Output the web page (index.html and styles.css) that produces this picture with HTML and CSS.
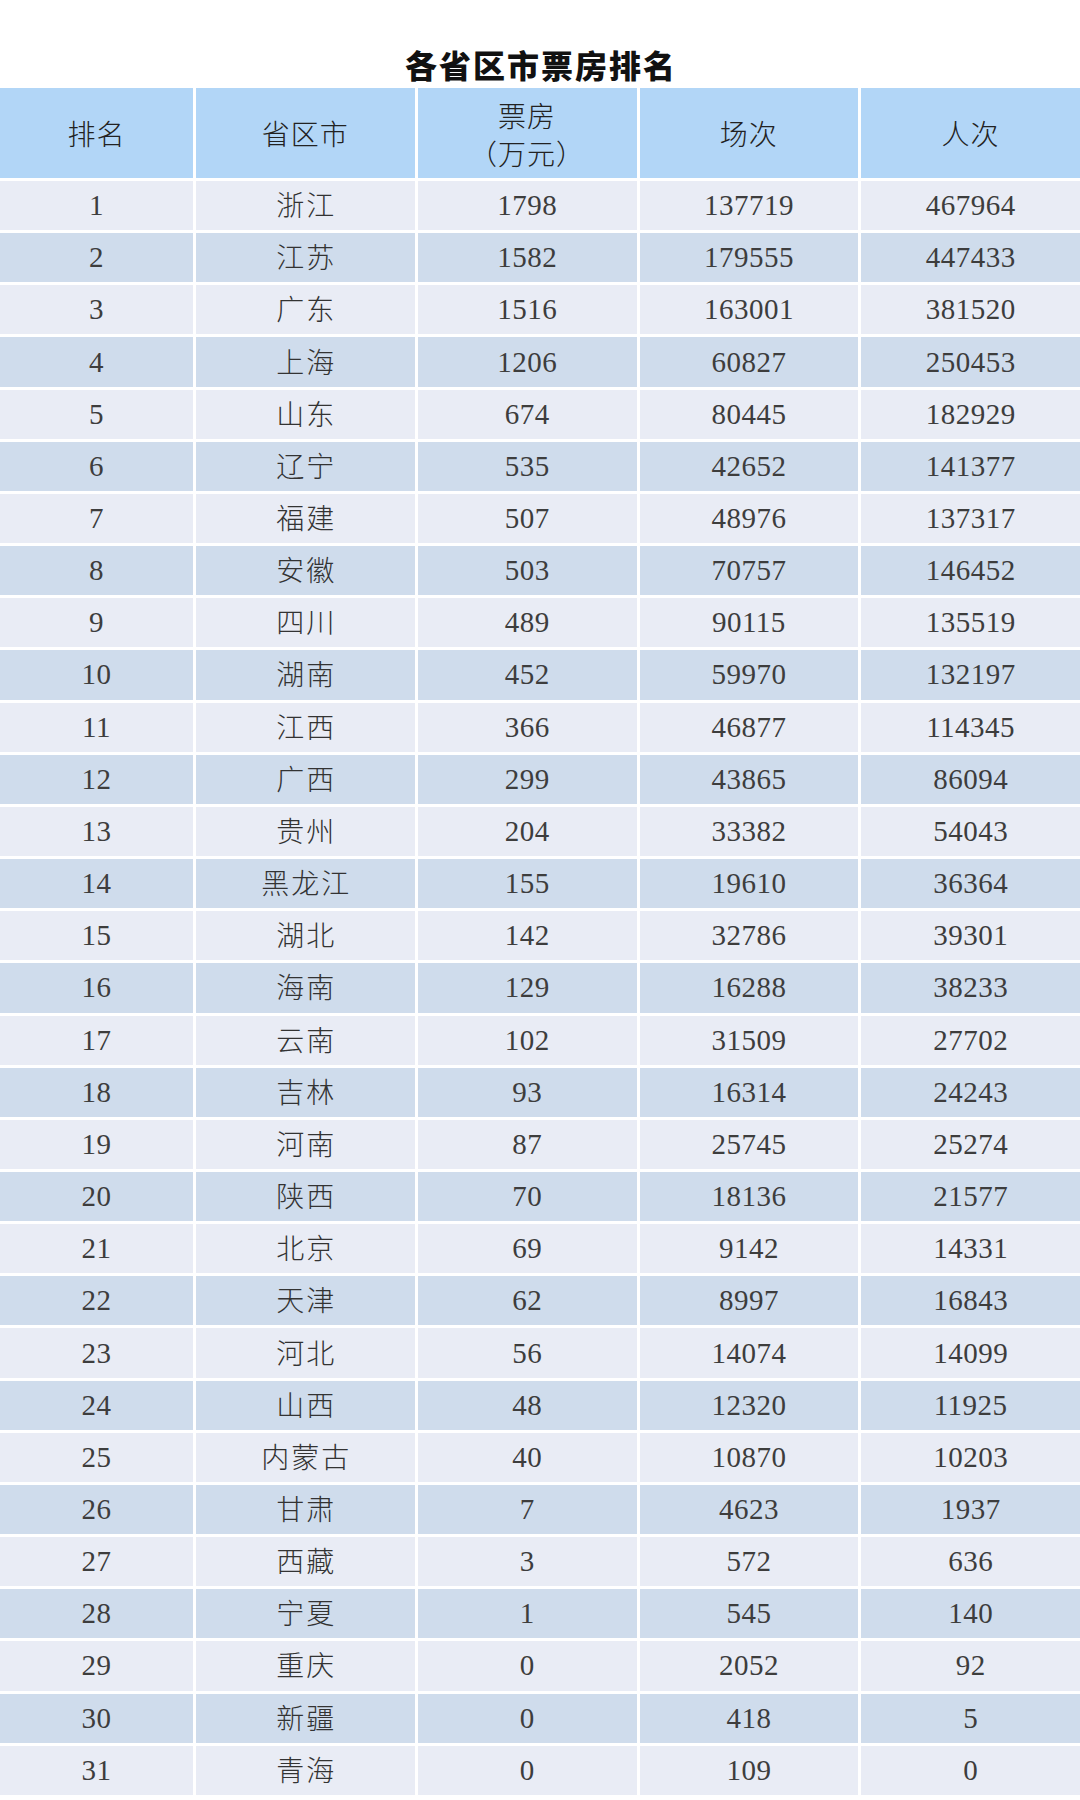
FILE: index.html
```html
<!DOCTYPE html>
<html lang="zh-CN">
<head>
<meta charset="utf-8">
<title>各省区市票房排名</title>
<link rel="stylesheet" href="styles.css">
</head>
<body>
<h1 class="title">各省区市票房排名</h1>
<div class="table">
  <div class="row head">
    <div class="cell">排名</div>
    <div class="cell">省区市</div>
    <div class="cell two"><span>票房</span><span>（万元）</span></div>
    <div class="cell">场次</div>
    <div class="cell">人次</div>
  </div>
  <div class="row odd"><div class="cell">1</div><div class="cell zh">浙江</div><div class="cell">1798</div><div class="cell">137719</div><div class="cell">467964</div></div>
  <div class="row even"><div class="cell">2</div><div class="cell zh">江苏</div><div class="cell">1582</div><div class="cell">179555</div><div class="cell">447433</div></div>
  <div class="row odd"><div class="cell">3</div><div class="cell zh">广东</div><div class="cell">1516</div><div class="cell">163001</div><div class="cell">381520</div></div>
  <div class="row even"><div class="cell">4</div><div class="cell zh">上海</div><div class="cell">1206</div><div class="cell">60827</div><div class="cell">250453</div></div>
  <div class="row odd"><div class="cell">5</div><div class="cell zh">山东</div><div class="cell">674</div><div class="cell">80445</div><div class="cell">182929</div></div>
  <div class="row even"><div class="cell">6</div><div class="cell zh">辽宁</div><div class="cell">535</div><div class="cell">42652</div><div class="cell">141377</div></div>
  <div class="row odd"><div class="cell">7</div><div class="cell zh">福建</div><div class="cell">507</div><div class="cell">48976</div><div class="cell">137317</div></div>
  <div class="row even"><div class="cell">8</div><div class="cell zh">安徽</div><div class="cell">503</div><div class="cell">70757</div><div class="cell">146452</div></div>
  <div class="row odd"><div class="cell">9</div><div class="cell zh">四川</div><div class="cell">489</div><div class="cell">90115</div><div class="cell">135519</div></div>
  <div class="row even"><div class="cell">10</div><div class="cell zh">湖南</div><div class="cell">452</div><div class="cell">59970</div><div class="cell">132197</div></div>
  <div class="row odd"><div class="cell">11</div><div class="cell zh">江西</div><div class="cell">366</div><div class="cell">46877</div><div class="cell">114345</div></div>
  <div class="row even"><div class="cell">12</div><div class="cell zh">广西</div><div class="cell">299</div><div class="cell">43865</div><div class="cell">86094</div></div>
  <div class="row odd"><div class="cell">13</div><div class="cell zh">贵州</div><div class="cell">204</div><div class="cell">33382</div><div class="cell">54043</div></div>
  <div class="row even"><div class="cell">14</div><div class="cell zh">黑龙江</div><div class="cell">155</div><div class="cell">19610</div><div class="cell">36364</div></div>
  <div class="row odd"><div class="cell">15</div><div class="cell zh">湖北</div><div class="cell">142</div><div class="cell">32786</div><div class="cell">39301</div></div>
  <div class="row even"><div class="cell">16</div><div class="cell zh">海南</div><div class="cell">129</div><div class="cell">16288</div><div class="cell">38233</div></div>
  <div class="row odd"><div class="cell">17</div><div class="cell zh">云南</div><div class="cell">102</div><div class="cell">31509</div><div class="cell">27702</div></div>
  <div class="row even"><div class="cell">18</div><div class="cell zh">吉林</div><div class="cell">93</div><div class="cell">16314</div><div class="cell">24243</div></div>
  <div class="row odd"><div class="cell">19</div><div class="cell zh">河南</div><div class="cell">87</div><div class="cell">25745</div><div class="cell">25274</div></div>
  <div class="row even"><div class="cell">20</div><div class="cell zh">陕西</div><div class="cell">70</div><div class="cell">18136</div><div class="cell">21577</div></div>
  <div class="row odd"><div class="cell">21</div><div class="cell zh">北京</div><div class="cell">69</div><div class="cell">9142</div><div class="cell">14331</div></div>
  <div class="row even"><div class="cell">22</div><div class="cell zh">天津</div><div class="cell">62</div><div class="cell">8997</div><div class="cell">16843</div></div>
  <div class="row odd"><div class="cell">23</div><div class="cell zh">河北</div><div class="cell">56</div><div class="cell">14074</div><div class="cell">14099</div></div>
  <div class="row even"><div class="cell">24</div><div class="cell zh">山西</div><div class="cell">48</div><div class="cell">12320</div><div class="cell">11925</div></div>
  <div class="row odd"><div class="cell">25</div><div class="cell zh">内蒙古</div><div class="cell">40</div><div class="cell">10870</div><div class="cell">10203</div></div>
  <div class="row even"><div class="cell">26</div><div class="cell zh">甘肃</div><div class="cell">7</div><div class="cell">4623</div><div class="cell">1937</div></div>
  <div class="row odd"><div class="cell">27</div><div class="cell zh">西藏</div><div class="cell">3</div><div class="cell">572</div><div class="cell">636</div></div>
  <div class="row even"><div class="cell">28</div><div class="cell zh">宁夏</div><div class="cell">1</div><div class="cell">545</div><div class="cell">140</div></div>
  <div class="row odd"><div class="cell">29</div><div class="cell zh">重庆</div><div class="cell">0</div><div class="cell">2052</div><div class="cell">92</div></div>
  <div class="row even"><div class="cell">30</div><div class="cell zh">新疆</div><div class="cell">0</div><div class="cell">418</div><div class="cell">5</div></div>
  <div class="row odd"><div class="cell">31</div><div class="cell zh">青海</div><div class="cell">0</div><div class="cell">109</div><div class="cell">0</div></div>
</div>
</body>
</html>
```

FILE: styles.css
```css
html, body {
  margin: 0;
  padding: 0;
  background: #ffffff;
}

body {
  width: 1080px;
  font-family: "Liberation Serif", "Noto Sans CJK SC", serif;
  color: #3d3d3d;
}

.title {
  margin: 0;
  height: 88px;
  box-sizing: border-box;
  padding-top: 48px;
  text-align: center;
  font-family: "Noto Sans CJK SC", sans-serif;
  font-weight: 900;
  font-size: 32px;
  line-height: 32px;
  letter-spacing: 2px;
  text-indent: 2px;
  color: #111111;
}

.table {
  display: flex;
  flex-direction: column;
  gap: 3px;
  background: #ffffff;
}

.row {
  display: grid;
  grid-template-columns: 193px 1fr 1fr 1fr 1fr;
  column-gap: 3px;
  height: 49.16px;
}

.cell {
  display: flex;
  align-items: center;
  justify-content: center;
  font-size: 29px;
  font-weight: 400;
  letter-spacing: 0.5px;
}

.cell.zh {
  font-family: "Noto Sans CJK SC", sans-serif;
  font-weight: 300;
  font-size: 28px;
  letter-spacing: 2px;
  text-indent: 2px;
  padding-bottom: 3px;
  box-sizing: border-box;
  color: #333333;
}

.odd .cell {
  background: #e9ecf5;
}

.even .cell {
  background: #cfdcec;
}

.row.head {
  height: 90px;
}

.head .cell {
  background: #b2d6f7;
  font-family: "Noto Sans CJK SC", sans-serif;
  font-weight: 300;
  font-size: 28px;
  color: #222222;
  letter-spacing: 1px;
}

.head .two {
  flex-direction: column;
  line-height: 38px;
  padding-top: 2px;
  box-sizing: border-box;
}
```
